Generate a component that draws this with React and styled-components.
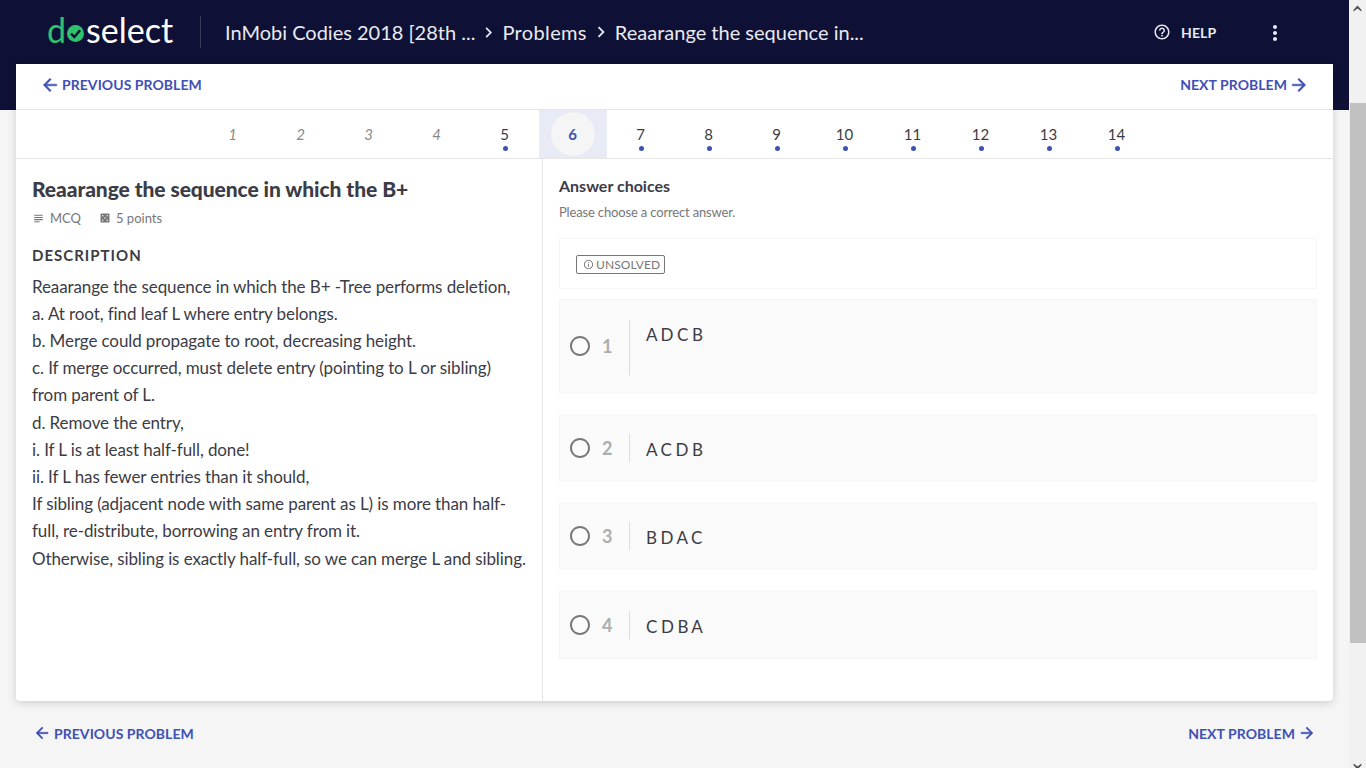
import React from 'react'
import styled, { createGlobalStyle } from 'styled-components'
import {
    MdArrowBack,
    MdArrowForward,
    MdCasino,
    MdChevronRight,
    MdHelpOutline,
    MdInfoOutline,
    MdMoreVert,
    MdRadioButtonUnchecked,
    MdSubject,
} from 'react-icons/md'

const problems = [
    { n: 1 }, { n: 2 }, { n: 3 }, { n: 4 },
    { n: 5, open: true }, { n: 6, active: true }, { n: 7, open: true },
    { n: 8, open: true }, { n: 9, open: true }, { n: 10, open: true },
    { n: 11, open: true }, { n: 12, open: true }, { n: 13, open: true }, { n: 14, open: true },
]

const description = [
    'Reaarange the sequence in which the B+ -Tree performs deletion,',
    'a. At root, find leaf L where entry belongs.',
    'b. Merge could propagate to root, decreasing height.',
    'c. If merge occurred, must delete entry (pointing to L or sibling) from parent of L.',
    'd. Remove the entry,',
    'i. If L is at least half-full, done!',
    'ii. If L has fewer entries than it should,',
    'If sibling (adjacent node with same parent as L) is more than half-full, re-distribute, borrowing an entry from it.',
    'Otherwise, sibling is exactly half-full, so we can merge L and sibling.',
]

const choices = [
    { n: 1, text: 'A D C B', height: 95, tall: true },
    { n: 2, text: 'A C D B', height: 68 },
    { n: 3, text: 'B D A C', height: 68 },
    { n: 4, text: 'C D B A', height: 69 },
]

const App = () => {
    return (
        <>
            <GlobalStyle />
            <Page>
                <Main>
                    <Header>
                        <Logo>
                            <LogoGreen>d</LogoGreen>
                            <LogoMark viewBox="0 0 20 20">
                                <circle cx="10" cy="10" r="10" fill="#2ec26e" />
                                <path d="M4.8 10.2l3.8 4 6.8-8" fill="none" stroke="#0f1035" strokeWidth="2.8" />
                            </LogoMark>
                            <span>select</span>
                        </Logo>
                        <Crumbs>
                            <Crumb>InMobi Codies 2018 [28th ...</Crumb>
                            <MdChevronRight size={21} />
                            <Crumb $spacing={0.35}>Problems</Crumb>
                            <MdChevronRight size={22} />
                            <Crumb>Reaarange the sequence in...</Crumb>
                        </Crumbs>
                        <Help>
                            <MdHelpOutline size={18} />
                            HELP
                        </Help>
                        <More>
                            <MdMoreVert size={24} />
                        </More>
                    </Header>

                    <Card>
                        <TopNav>
                            <NavLink><MdArrowBack size={20} />PREVIOUS PROBLEM</NavLink>
                            <NavLink>NEXT PROBLEM<MdArrowForward size={20} /></NavLink>
                        </TopNav>
                        <Tabs>
                            {problems.map((p) => (
                                <Tab key={p.n} $active={p.active}>
                                    <TabNumber $active={p.active} $open={p.open}>{p.n}</TabNumber>
                                    {p.open && <Dot />}
                                </Tab>
                            ))}
                        </Tabs>
                        <Body>
                            <Left>
                                <Title>Reaarange the sequence in which the B+</Title>
                                <Meta>
                                    <MetaItem><MdSubject size={13} />MCQ</MetaItem>
                                    <MetaItem><MdCasino size={12} />5 points</MetaItem>
                                </Meta>
                                <SectionLabel>DESCRIPTION</SectionLabel>
                                {description.map((line) => (
                                    <Line key={line}>{line}</Line>
                                ))}
                            </Left>
                            <Right>
                                <AnswerTitle>Answer choices</AnswerTitle>
                                <AnswerHint>Please choose a correct answer.</AnswerHint>
                                <StatusBox>
                                    <Status><MdInfoOutline size={11} />UNSOLVED</Status>
                                </StatusBox>
                                {choices.map((c) => (
                                    <Choice key={c.n} $height={c.height} $tall={c.tall}>
                                        <Radio><MdRadioButtonUnchecked size={24} /></Radio>
                                        <ChoiceNumber>{c.n}</ChoiceNumber>
                                        <ChoiceText $tall={c.tall}>{c.text}</ChoiceText>
                                    </Choice>
                                ))}
                            </Right>
                        </Body>
                    </Card>

                    <BottomNav>
                        <BottomLink><MdArrowBack size={18} />PREVIOUS PROBLEM</BottomLink>
                        <BottomLink>NEXT PROBLEM<MdArrowForward size={18} /></BottomLink>
                    </BottomNav>
                </Main>
                <ScrollTrack>
                    <ScrollArrow viewBox="0 0 10 8" $flip={false}>
                        <path d="M5 0.5L9.5 5.5V7.5L5 4L0.5 7.5V5.5Z" />
                    </ScrollArrow>
                    <ScrollThumb />
                    <ScrollArrow viewBox="0 0 10 8" $flip>
                        <path d="M5 0.5L9.5 5.5V7.5L5 4L0.5 7.5V5.5Z" />
                    </ScrollArrow>
                </ScrollTrack>
            </Page>
        </>
    )
}

export default App

const GlobalStyle = createGlobalStyle`
    html, body {
        margin: 0;
        padding: 0;
        overflow: hidden;
    }

    body {
        font-family: Lato, "Liberation Sans", sans-serif;
        color: #3c3c46;
    }
`

const Page = styled.div`
    display: flex;
    width: 1366px;
    height: 768px;
    overflow: hidden;
`

const Main = styled.div`
    width: 1349px;
    background: #f5f5f5;
`

const Header = styled.header`
    display: flex;
    align-items: flex-start;
    height: 110px;
    margin-bottom: -46px;
    padding: 0 62px 0 48px;
    box-sizing: border-box;
    background: #0f1035;
    color: #e8eaf0;
`

const Logo = styled.div`
    display: flex;
    align-items: center;
    width: 152px;
    height: 32px;
    margin-top: 14px;
    font-size: 34px;
    font-weight: 400;
    line-height: 32px;
    color: #fff;
`

const LogoGreen = styled.span`
    color: #2ec26e;
    margin-left: -1px;
`

const LogoMark = styled.svg`
    width: 17px;
    height: 17px;
    margin: 6px 2px 0 1px;
    flex: none;
`

const Crumbs = styled.div`
    display: flex;
    align-items: center;
    gap: 3px;
    height: 32px;
    margin-top: 16px;
    padding-left: 24px;
    border-left: 1px solid #3a3b58;
`

const Crumb = styled.span`
    font-size: 20px;
    letter-spacing: ${(p) => p.$spacing || 0}px;
    white-space: nowrap;
`

const Help = styled.div`
    display: flex;
    align-items: center;
    gap: 10px;
    height: 32px;
    margin: 16px 0 0 auto;
    width: 110px;
    font-size: 14px;
    letter-spacing: 0.1px;
    font-weight: 700;
`

const More = styled.div`
    display: flex;
    margin-top: 21px;
`

const Card = styled.main`
    width: 1317px;
    height: 637px;
    margin-left: 16px;
    background: #fff;
    border-radius: 0 0 4px 4px;
    box-shadow: 0 2px 8px rgba(0, 0, 0, 0.16);
`

const TopNav = styled.div`
    display: flex;
    justify-content: space-between;
    align-items: center;
    height: 41px;
    padding: 0 24px 4px;
    border-bottom: 1px solid #e5e5e5;
`

const NavLink = styled.a`
    display: flex;
    align-items: center;
    gap: 2px;
    font-size: 14px;
    font-weight: 700;
    letter-spacing: 0.05px;
    color: #3f51b5;

    svg path:not([fill='none']) {
        stroke: currentColor;
        stroke-width: 0.6;
    }
`

const BottomLink = styled(NavLink)`
    gap: 3px;
`

const Tabs = styled.nav`
    display: flex;
    justify-content: center;
    height: 48px;
    border-bottom: 1px solid #e5e5e5;
`

const Tab = styled.div`
    position: relative;
    display: flex;
    align-items: center;
    justify-content: center;
    width: 68px;
    background: ${(p) => (p.$active ? '#e8eaf6' : 'transparent')};
`

const TabNumber = styled.span`
    display: flex;
    align-items: center;
    justify-content: center;
    width: 44px;
    height: 44px;
    border-radius: 50%;
    font-size: 15px;
    font-style: ${(p) => (p.$active || p.$open ? 'normal' : 'italic')};
    font-weight: ${(p) => (p.$active ? 700 : 400)};
    color: ${(p) => (p.$active ? '#3f51b5' : p.$open ? '#3c3c46' : '#8a8a8a')};
    background: ${(p) => (p.$active ? '#f5f5f5' : 'transparent')};
`

const Dot = styled.i`
    position: absolute;
    left: 32px;
    bottom: 7px;
    width: 5px;
    height: 5px;
    border-radius: 50%;
    background: #3f51b5;
`

const Body = styled.div`
    display: flex;
    height: 542px;
`

const Left = styled.section`
    width: 527px;
    padding: 17px 16px 0;
    box-sizing: border-box;
    border-right: 1px solid #e5e5e5;
`

const Title = styled.h1`
    margin: 0;
    font-size: 21px;
    line-height: 26px;
    font-weight: 900;
    letter-spacing: -0.07px;
    color: #3c3c46;
`

const Meta = styled.div`
    display: flex;
    gap: 18px;
    margin-top: 7px;
    font-size: 13px;
    line-height: 18px;
    color: #777;
`

const MetaItem = styled.span`
    display: flex;
    align-items: center;
    gap: 5px;
`

const SectionLabel = styled.h2`
    margin: 18px 0 7.6px;
    font-size: 15px;
    line-height: 20px;
    letter-spacing: 1px;
    font-weight: 700;
    color: #3c3c46;
`

const Line = styled.div`
    font-size: 17px;
    line-height: 27.2px;
    letter-spacing: -0.1px;
    color: #3c3c46;
`

const Right = styled.section`
    flex: 1;
    padding: 17px 16px 0 16px;
`

const AnswerTitle = styled.h3`
    margin: 0;
    font-size: 16px;
    line-height: 20px;
    font-weight: 700;
`

const AnswerHint = styled.p`
    margin: 7px 0 17px;
    font-size: 13px;
    line-height: 18px;
    letter-spacing: -0.16px;
    color: #777;
`

const StatusBox = styled.div`
    display: flex;
    align-items: center;
    height: 51px;
    padding: 1px 0 0 16px;
    box-sizing: border-box;
    border: 1px solid #f5f5f5;
    margin-bottom: 10px;
`

const Status = styled.span`
    display: flex;
    align-items: center;
    gap: 2px;
    height: 19px;
    padding: 0 4px 0 6px;
    box-sizing: border-box;
    border: 1px solid #777;
    border-radius: 2px;
    font-size: 12px;
    letter-spacing: 0.1px;
    color: #777;
`

const Choice = styled.div`
    display: flex;
    align-items: center;
    height: ${(p) => p.$height}px;
    margin-bottom: 20px;
    padding: 0 0 ${(p) => (p.$tall ? '1px' : '0')} 8px;
    box-sizing: border-box;
    background: #fafafa;
    border: 1px solid #f5f5f5;
`

const Radio = styled.span`
    display: flex;
    color: #777;
`

const ChoiceNumber = styled.span`
    width: 27px;
    margin-left: 10px;
    font-size: 18px;
    font-weight: 700;
    color: #adadad;
`

const ChoiceText = styled.div`
    height: ${(p) => (p.$tall ? '53px' : '25px')};
    margin-top: ${(p) => (p.$tall ? '3px' : '0')};
    padding: ${(p) => (p.$tall ? '2px' : '3px')} 0 0 16px;
    border-left: 1px solid #ddd;
    font-size: 17px;
    line-height: 26px;
    letter-spacing: -0.4px;
`

const BottomNav = styled.div`
    display: flex;
    justify-content: space-between;
    align-items: center;
    padding: 23px 33px 0 33px;
`

const ScrollTrack = styled.aside`
    display: flex;
    flex-direction: column;
    align-items: center;
    justify-content: space-between;
    width: 17px;
    padding: 5px 0;
    box-sizing: border-box;
    background: #f1f1f1;
`

const ScrollArrow = styled.svg`
    flex: none;
    width: 9px;
    height: 7px;
    fill: #505050;
    transform: ${(p) => (p.$flip ? 'scaleY(-1)' : 'none')};
`

const ScrollThumb = styled.div`
    flex: none;
    align-self: flex-end;
    width: 16px;
    height: 540px;
    margin: 91px 0 120px;
    background: #c1c1c1;
`
